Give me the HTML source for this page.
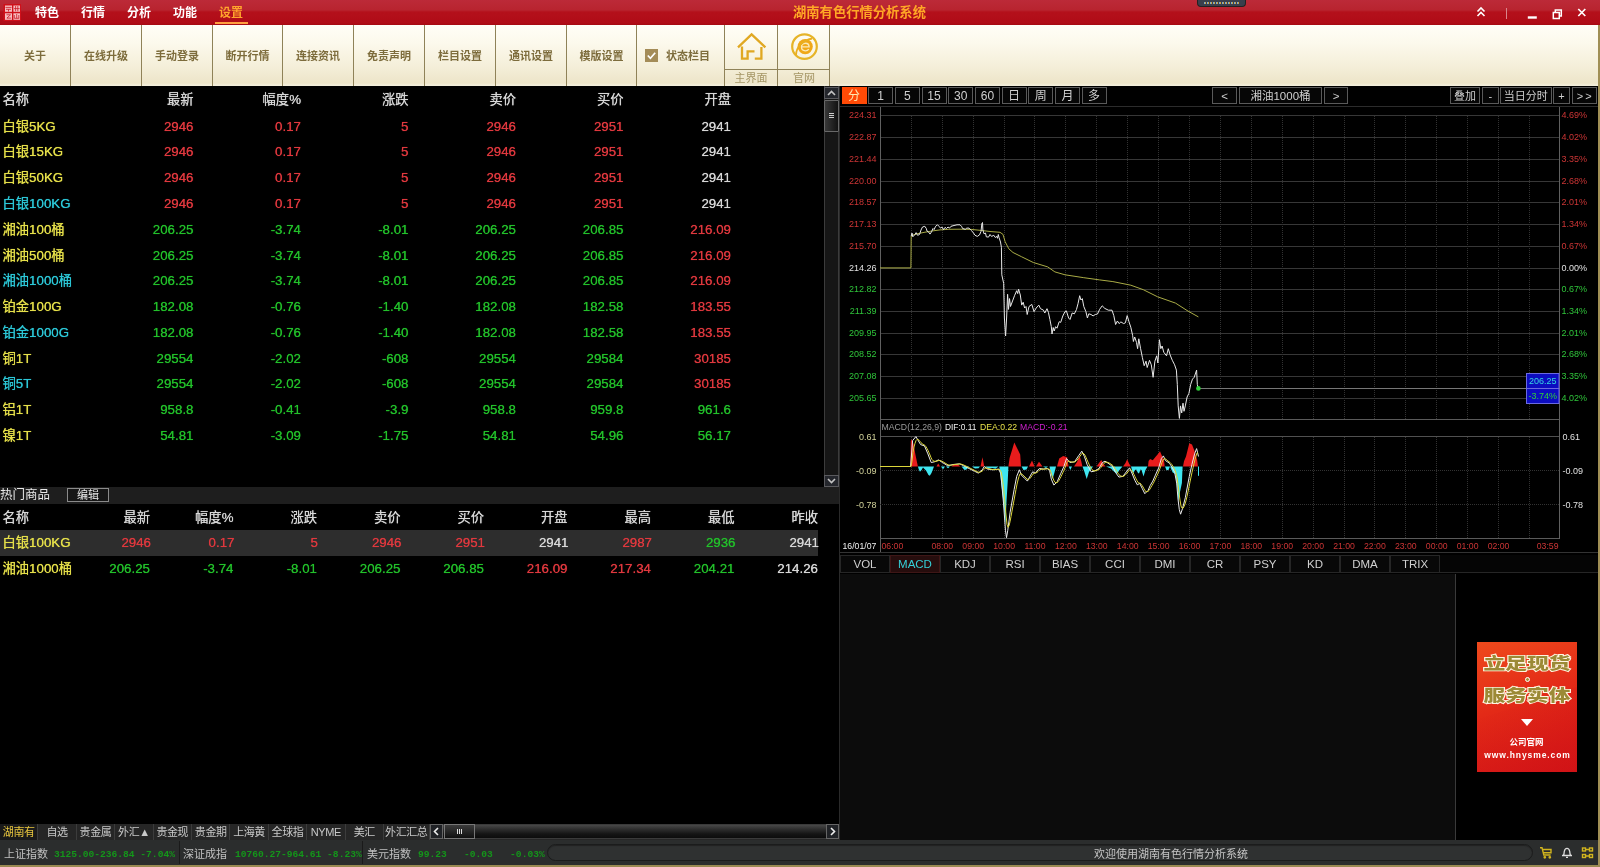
<!DOCTYPE html><html lang="zh"><head><meta charset="utf-8"><title>湖南有色行情分析系统</title><style>
*{margin:0;padding:0;box-sizing:border-box}
html,body{width:1600px;height:867px;overflow:hidden;background:#000}
#app{position:absolute;left:0;top:0;width:1600px;height:867px;will-change:transform}
body{position:relative;font-family:"Liberation Sans","Noto Sans CJK SC",sans-serif;font-size:13.3px;color:#ddd}
.abs{position:absolute}
#title{left:0;top:0;width:1600px;height:25px;background:linear-gradient(#bc2a38 0,#b8242f 10px,#b4101b 12px,#b00c17 23px,#a50a12 25px)}
#title .m{position:absolute;top:5px;font-size:12px;font-weight:bold;color:#fff;line-height:16px;white-space:nowrap}
#toolbar{left:0;top:25px;width:1598px;height:61px;background:linear-gradient(#fffef7 0,#fcf9ec 30%,#f4eed8 70%,#ede5c9 58px,#f3eeda 60px,#f3eeda 61px)}
.tb{position:absolute;top:0;height:61px;border-right:1px solid #8f8258;color:#7d6c3c;font-size:11px;font-weight:bold;text-align:center;line-height:63px;white-space:nowrap}
.row{position:absolute;left:0;height:26px;line-height:26px;white-space:nowrap;text-shadow:0 0 .7px currentColor}
.c{position:absolute;top:0;text-align:right;white-space:nowrap}
.r{color:#e0383e}.g{color:#22c02a}.w{color:#d8d8d8}.y{color:#e6e04a}.cy{color:#2cc8d8}
.btn{position:absolute;top:87px;height:17px;border:1px solid #5a5a5a;background:#060606;color:#d0d0d0;font-size:11.5px;line-height:16px;text-align:center;white-space:nowrap}
.itab{position:absolute;top:555px;width:50px;height:18px;border:1px solid #262626;background:#080808;color:#d0d0d0;font-size:11.5px;line-height:16px;text-align:center}
.btab{position:absolute;top:824px;height:16px;line-height:17px;font-size:11px;color:#c8c8c8;text-align:center;white-space:nowrap;border-right:1px solid #3c3c3c;letter-spacing:-0.4px}
.sl{position:absolute;top:847px;font-size:11px;line-height:15px;color:#c0c0c0;white-space:nowrap}
.sn{position:absolute;top:848px;font-family:"Liberation Mono",monospace;font-size:9.6px;line-height:13px;color:#14961a;white-space:pre;font-weight:bold}
</style></head><body><div id="app">
<div id="title" class="abs">
<svg class="abs" style="left:3px;top:3px" width="19" height="19" viewBox="3 3 19 19"><rect x="3.500" y="4" width="17.500" height="17" fill="#cf101a"/><g fill="#f7bcc0"><rect x="5" y="5.500" width="7" height="6.300"/><rect x="13.400" y="5.500" width="6.600" height="6.300"/><rect x="5" y="13.300" width="7" height="6.500"/><rect x="13.400" y="13.300" width="6.600" height="6.500"/></g><g stroke="#c81824" stroke-width=".8" fill="none"><path d="M5.500 7.400h6M6 9.300h5M8.500 9.300v2.200M15.600 6v5.300M17.800 6v5.300M14 8.600h5.600M6.500 14.800h4l-3.600 3.300h4.300M14.300 15v3.300h5M16.700 14v4.200M18.800 15v3"/></g></svg>
<div class="m" style="left:35px">特色</div>
<div class="m" style="left:81px">行情</div>
<div class="m" style="left:127px">分析</div>
<div class="m" style="left:173px">功能</div>
<div class="m" style="left:219px;color:#ffa42c">设置</div>
<div class="abs" style="left:215px;top:22px;width:33px;height:2px;background:#ffa040"></div>
<div class="abs" style="left:793px;top:4.2px;font-size:13.3px;font-weight:bold;color:#ffa726;line-height:18px;white-space:nowrap">湖南有色行情分析系统</div>
<div class="abs" style="left:1197px;top:0;width:49px;height:7px;background:#3a3f4c;border-radius:0 0 4px 4px;border:1px solid #222;border-top:0"><div style="position:absolute;left:6px;top:2px;width:36px;height:2px;background:repeating-linear-gradient(90deg,#7ac 0 1px,#c9a040 1px 2px,transparent 2px 3px)"></div></div>
<svg class="abs" style="left:1470px;top:0" width="130" height="25" viewBox="0 0 130 25" fill="none" stroke="#fff" stroke-width="1.6"><path d="M7.5 11.5l3.5-3.5l3.5 3.5M7.5 16l3.5-3.5l3.5 3.5"/><path d="M36.5 8v11" stroke="#d9868c" stroke-width="1"/><g transform="translate(-1.2 0)"><path d="M59 17.5h9" stroke-width="2.4"/><path d="M84.5 12.5h6v6h-6zM86.5 12v-2h6v6h-2" stroke-width="1.5"/><path d="M109.5 9l7 7M116.5 9l-7 7" stroke-width="1.7"/></g></svg>
</div>
<div id="toolbar" class="abs">
<div class="tb" style="left:0px;width:71px">关于</div>
<div class="tb" style="left:71px;width:71px">在线升级</div>
<div class="tb" style="left:142px;width:71px">手动登录</div>
<div class="tb" style="left:213px;width:70px">断开行情</div>
<div class="tb" style="left:283px;width:71px">连接资讯</div>
<div class="tb" style="left:354px;width:71px">免责声明</div>
<div class="tb" style="left:425px;width:71px">栏目设置</div>
<div class="tb" style="left:496px;width:71px">通讯设置</div>
<div class="tb" style="left:567px;width:70px">模版设置</div>
<div class="tb" style="left:637px;width:88px;text-align:left"><span style="position:absolute;left:8px;top:24px;width:13px;height:13px;background:#a48c58"></span><svg style="position:absolute;left:8px;top:24px" width="13" height="13" viewBox="0 0 13 13"><path d="M2.8 6.5l2.6 2.8l4.8-5.6" stroke="#fff" stroke-width="1.7" fill="none"/></svg><span style="position:absolute;left:29px">状态栏目</span></div>
<div class="abs" style="left:725px;top:0;width:52.5px;height:61px;border-right:1px solid #8f8258"></div>
<div class="abs" style="left:777.5px;top:0;width:52.5px;height:61px;border-right:1px solid #8f8258"></div>
<div class="abs" style="left:725px;top:44px;width:105px;height:1px;background:#8f8258"></div>
<div class="abs" style="left:725px;top:46px;width:52px;text-align:center;font-size:11px;line-height:14px;color:#a59666">主界面</div>
<div class="abs" style="left:778px;top:46px;width:52px;text-align:center;font-size:11px;line-height:14px;color:#a59666">官网</div>
<svg class="abs" style="left:733px;top:5px" width="38" height="34" viewBox="733 30 38 34" fill="none" stroke="#e0a822" stroke-width="2.300" stroke-linejoin="miter"><path d="M738 47.3L751.6 34.4L765.4 47.3"/><path d="M742 46.5V58.6H747.6V51.4H754.5"/><path d="M754.8 58.6H761.4V47"/></svg>
<svg class="abs" style="left:788px;top:5px" width="34" height="34" viewBox="788 30 34 34" fill="none"><circle cx="804.5" cy="46.6" r="12.3" stroke="#e6b428" stroke-width="2.2"/><circle cx="805.2" cy="46.6" r="7.600" fill="#f0a818"/><path d="M801.5 46.8h7.6c0-2.2-1.6-3.6-3.7-3.6c-2.300 0-3.900 1.600-3.900 3.900c0 2.300 1.600 3.700 3.900 3.700c1.600 0 2.700-.6 3.400-1.600" stroke="#fbe9b8" stroke-width="1.35"/><path d="M796 55c0-7 6-14.500 16-16.500" stroke="#e9ae20" stroke-width="1.8"/></svg>
</div>
<div class="abs" style="left:1598px;top:25px;width:2px;height:842px;background:#a08f55"></div>
<div class="row" style="top:86.5px;width:820px;height:26px;line-height:26px;"><span class="c w" style="left:2.5px;text-align:left">名称</span><span class="c w" style="right:626.5px">最新</span><span class="c w" style="right:519.0px">幅度%</span><span class="c w" style="right:411.5px">涨跌</span><span class="c w" style="right:304.0px">卖价</span><span class="c w" style="right:196.5px">买价</span><span class="c w" style="right:89.0px">开盘</span></div>
<div class="row" style="top:113.7px;width:820px;height:26px;line-height:26px;"><span class="c y" style="left:2.5px;text-align:left">白银5KG</span><span class="c r" style="right:626.5px">2946</span><span class="c r" style="right:519.0px">0.17</span><span class="c r" style="right:411.5px">5</span><span class="c r" style="right:304.0px">2946</span><span class="c r" style="right:196.5px">2951</span><span class="c w" style="right:89.0px">2941</span></div>
<div class="row" style="top:139.4px;width:820px;height:26px;line-height:26px;"><span class="c y" style="left:2.5px;text-align:left">白银15KG</span><span class="c r" style="right:626.5px">2946</span><span class="c r" style="right:519.0px">0.17</span><span class="c r" style="right:411.5px">5</span><span class="c r" style="right:304.0px">2946</span><span class="c r" style="right:196.5px">2951</span><span class="c w" style="right:89.0px">2941</span></div>
<div class="row" style="top:165.2px;width:820px;height:26px;line-height:26px;"><span class="c y" style="left:2.5px;text-align:left">白银50KG</span><span class="c r" style="right:626.5px">2946</span><span class="c r" style="right:519.0px">0.17</span><span class="c r" style="right:411.5px">5</span><span class="c r" style="right:304.0px">2946</span><span class="c r" style="right:196.5px">2951</span><span class="c w" style="right:89.0px">2941</span></div>
<div class="row" style="top:191.0px;width:820px;height:26px;line-height:26px;"><span class="c cy" style="left:2.5px;text-align:left">白银100KG</span><span class="c r" style="right:626.5px">2946</span><span class="c r" style="right:519.0px">0.17</span><span class="c r" style="right:411.5px">5</span><span class="c r" style="right:304.0px">2946</span><span class="c r" style="right:196.5px">2951</span><span class="c w" style="right:89.0px">2941</span></div>
<div class="row" style="top:216.7px;width:820px;height:26px;line-height:26px;"><span class="c y" style="left:2.5px;text-align:left">湘油100桶</span><span class="c g" style="right:626.5px">206.25</span><span class="c g" style="right:519.0px">-3.74</span><span class="c g" style="right:411.5px">-8.01</span><span class="c g" style="right:304.0px">206.25</span><span class="c g" style="right:196.5px">206.85</span><span class="c r" style="right:89.0px">216.09</span></div>
<div class="row" style="top:242.5px;width:820px;height:26px;line-height:26px;"><span class="c y" style="left:2.5px;text-align:left">湘油500桶</span><span class="c g" style="right:626.5px">206.25</span><span class="c g" style="right:519.0px">-3.74</span><span class="c g" style="right:411.5px">-8.01</span><span class="c g" style="right:304.0px">206.25</span><span class="c g" style="right:196.5px">206.85</span><span class="c r" style="right:89.0px">216.09</span></div>
<div class="row" style="top:268.3px;width:820px;height:26px;line-height:26px;"><span class="c cy" style="left:2.5px;text-align:left">湘油1000桶</span><span class="c g" style="right:626.5px">206.25</span><span class="c g" style="right:519.0px">-3.74</span><span class="c g" style="right:411.5px">-8.01</span><span class="c g" style="right:304.0px">206.25</span><span class="c g" style="right:196.5px">206.85</span><span class="c r" style="right:89.0px">216.09</span></div>
<div class="row" style="top:294.0px;width:820px;height:26px;line-height:26px;"><span class="c y" style="left:2.5px;text-align:left">铂金100G</span><span class="c g" style="right:626.5px">182.08</span><span class="c g" style="right:519.0px">-0.76</span><span class="c g" style="right:411.5px">-1.40</span><span class="c g" style="right:304.0px">182.08</span><span class="c g" style="right:196.5px">182.58</span><span class="c r" style="right:89.0px">183.55</span></div>
<div class="row" style="top:319.8px;width:820px;height:26px;line-height:26px;"><span class="c cy" style="left:2.5px;text-align:left">铂金1000G</span><span class="c g" style="right:626.5px">182.08</span><span class="c g" style="right:519.0px">-0.76</span><span class="c g" style="right:411.5px">-1.40</span><span class="c g" style="right:304.0px">182.08</span><span class="c g" style="right:196.5px">182.58</span><span class="c r" style="right:89.0px">183.55</span></div>
<div class="row" style="top:345.6px;width:820px;height:26px;line-height:26px;"><span class="c y" style="left:2.5px;text-align:left">铜1T</span><span class="c g" style="right:626.5px">29554</span><span class="c g" style="right:519.0px">-2.02</span><span class="c g" style="right:411.5px">-608</span><span class="c g" style="right:304.0px">29554</span><span class="c g" style="right:196.5px">29584</span><span class="c r" style="right:89.0px">30185</span></div>
<div class="row" style="top:371.4px;width:820px;height:26px;line-height:26px;"><span class="c cy" style="left:2.5px;text-align:left">铜5T</span><span class="c g" style="right:626.5px">29554</span><span class="c g" style="right:519.0px">-2.02</span><span class="c g" style="right:411.5px">-608</span><span class="c g" style="right:304.0px">29554</span><span class="c g" style="right:196.5px">29584</span><span class="c r" style="right:89.0px">30185</span></div>
<div class="row" style="top:397.1px;width:820px;height:26px;line-height:26px;"><span class="c y" style="left:2.5px;text-align:left">铝1T</span><span class="c g" style="right:626.5px">958.8</span><span class="c g" style="right:519.0px">-0.41</span><span class="c g" style="right:411.5px">-3.9</span><span class="c g" style="right:304.0px">958.8</span><span class="c g" style="right:196.5px">959.8</span><span class="c g" style="right:89.0px">961.6</span></div>
<div class="row" style="top:422.9px;width:820px;height:26px;line-height:26px;"><span class="c y" style="left:2.5px;text-align:left">镍1T</span><span class="c g" style="right:626.5px">54.81</span><span class="c g" style="right:519.0px">-3.09</span><span class="c g" style="right:411.5px">-1.75</span><span class="c g" style="right:304.0px">54.81</span><span class="c g" style="right:196.5px">54.96</span><span class="c g" style="right:89.0px">56.17</span></div>
<div class="abs" style="left:824px;top:86px;width:15px;height:402px;background:#161616;border-left:1px solid #3c3c3c;border-right:1px solid #3c3c3c"></div>
<div class="abs" style="left:824px;top:87px;width:15px;height:12px;background:#24262c;border:1px solid #5a5a5e"><svg width="13" height="10" viewBox="-1 0 13 10" style="display:block"><path d="M2 7l3.500-3.500l3.500 3.500" stroke="#c4c4c4" stroke-width="1.600" fill="none"/></svg></div>
<div class="abs" style="left:824px;top:100px;width:15px;height:32px;background:linear-gradient(90deg,#383838,#121212);border:1px solid #686868;border-radius:1px"><div style="position:absolute;left:4px;top:12px;width:5px;height:1px;background:#ccc;box-shadow:0 2px 0 #ccc,0 4px 0 #ccc"></div></div>
<div class="abs" style="left:824px;top:474.500px;width:15px;height:12.500px;background:#24262c;border:1px solid #5a5a5e"><svg width="13" height="10" viewBox="-1 0 13 10" style="display:block"><path d="M2 3l3.500 3.500l3.500-3.500" stroke="#c4c4c4" stroke-width="1.600" fill="none"/></svg></div>
<div class="abs" style="left:0;top:487.300px;width:840px;height:16.300px;background:#1e1e1e"></div>
<div class="abs" style="left:0;top:488px;font-size:12.500px;line-height:15px;color:#e8e8e8;white-space:nowrap">热门商品</div>
<div class="abs" style="left:67px;top:488px;width:42px;height:14px;border:1px solid #8a8a8a;background:#161616;font-size:11px;line-height:12px;color:#e8e8e8;text-align:center">编辑</div>
<div class="row" style="top:504.5px;width:820px;height:26px;line-height:26px;"><span class="c w" style="left:2.5px;text-align:left">名称</span><span class="c w" style="right:670.0px">最新</span><span class="c w" style="right:586.5px">幅度%</span><span class="c w" style="right:503.0px">涨跌</span><span class="c w" style="right:419.5px">卖价</span><span class="c w" style="right:336.0px">买价</span><span class="c w" style="right:252.5px">开盘</span><span class="c w" style="right:169.0px">最高</span><span class="c w" style="right:85.5px">最低</span><span class="c w" style="right:2.0px">昨收</span></div>
<div class="row" style="top:529.8px;width:820px;height:26px;line-height:26px;background:#2d2d2d;width:818px;"><span class="c y" style="left:2.5px;text-align:left">白银100KG</span><span class="c r" style="right:667.0px">2946</span><span class="c r" style="right:583.5px">0.17</span><span class="c r" style="right:500.0px">5</span><span class="c r" style="right:416.5px">2946</span><span class="c r" style="right:333.0px">2951</span><span class="c w" style="right:249.5px">2941</span><span class="c r" style="right:166.0px">2987</span><span class="c g" style="right:82.5px">2936</span><span class="c w" style="right:-1.0px">2941</span></div>
<div class="row" style="top:556.2px;width:820px;height:26px;line-height:26px;"><span class="c y" style="left:2.5px;text-align:left">湘油1000桶</span><span class="c g" style="right:670.0px">206.25</span><span class="c g" style="right:586.5px">-3.74</span><span class="c g" style="right:503.0px">-8.01</span><span class="c g" style="right:419.5px">206.25</span><span class="c g" style="right:336.0px">206.85</span><span class="c r" style="right:252.5px">216.09</span><span class="c r" style="right:169.0px">217.34</span><span class="c g" style="right:85.5px">204.21</span><span class="c w" style="right:2.0px">214.26</span></div>
<div class="abs" style="left:0;top:824px;width:840px;height:16px;background:#262626"></div>
<div class="btab" style="left:0.0px;width:38.4px;color:#e8c63e;background:#1a1a1a;">湖南有</div>
<div class="btab" style="left:38.4px;width:38.4px;">自选</div>
<div class="btab" style="left:76.8px;width:38.4px;">贵金属</div>
<div class="btab" style="left:115.2px;width:38.4px;">外汇▲</div>
<div class="btab" style="left:153.6px;width:38.4px;">贵金现</div>
<div class="btab" style="left:192.0px;width:38.4px;">贵金期</div>
<div class="btab" style="left:230.4px;width:38.4px;">上海黄</div>
<div class="btab" style="left:268.8px;width:38.4px;">全球指</div>
<div class="btab" style="left:307.2px;width:38.4px;">NYME</div>
<div class="btab" style="left:345.6px;width:38.4px;">美汇</div>
<div class="btab" style="left:384.0px;width:45.5px;">外汇汇总</div>
<div class="abs" style="left:430px;top:824px;width:409px;height:15px;background:linear-gradient(#484848,#2c2c2c 35%,#141414 70%,#0c0c0c);border:1px solid #3a3a3a"></div>
<div class="abs" style="left:430px;top:824px;width:13px;height:15px;background:#202226;border:1px solid #666"><svg width="11" height="13" viewBox="0 0 11 13" style="display:block"><path d="M7 3l-3.500 3.500l3.500 3.500" stroke="#eee" stroke-width="1.600" fill="none"/></svg></div>
<div class="abs" style="left:826px;top:824px;width:13px;height:15px;background:#202226;border:1px solid #666"><svg width="11" height="13" viewBox="0 0 11 13" style="display:block"><path d="M4 3l3.500 3.500l-3.500 3.500" stroke="#eee" stroke-width="1.600" fill="none"/></svg></div>
<div class="abs" style="left:444px;top:824px;width:31px;height:15px;background:linear-gradient(#3c3c3c,#101010);border:1px solid #777"><div style="position:absolute;left:12px;top:4px;width:1px;height:5px;background:#ddd;box-shadow:2px 0 0 #ddd,4px 0 0 #ddd"></div></div>
<div class="abs" style="left:0;top:840px;width:1598px;height:25px;background:#2b2d2d"></div>
<div class="abs" style="left:0;top:865px;width:1600px;height:2px;background:#9a8a52"></div>
<div class="sl" style="left:4px">上证指数</div><div class="sn" style="left:54px">3125.00-236.84 -7.04%</div>
<div class="abs" style="left:179px;top:841px;width:1px;height:23px;background:#1a1a1a"></div>
<div class="sl" style="left:183px">深证成指</div><div class="sn" style="left:235px">10760.27-964.61 -8.23%</div>
<div class="abs" style="left:362px;top:841px;width:1px;height:23px;background:#1a1a1a"></div>
<div class="sl" style="left:367px">美元指数</div><div class="sn" style="left:418px">99.23   -0.03   -0.03%</div>
<div class="abs" style="left:547px;top:844px;width:986px;height:17px;border-radius:9px;background:#2f3131;border:1px solid #1b1c1c;box-shadow:inset 0 1px 1px #222"></div>
<div class="abs" style="left:1094px;top:847px;font-size:11px;line-height:15px;color:#c4c4c4;white-space:nowrap">欢迎使用湖南有色行情分析系统</div>
<svg class="abs" style="left:1538px;top:845px" width="58" height="16" viewBox="1538 845 58 16" fill="none"><g stroke="#d2b51e" stroke-width="1.4"><path d="M1540 847.700h2l1.800 7.300h6.800M1543 849.500h8v3.200h-7.200"/><circle cx="1544.800" cy="857.300" r=".7"/><circle cx="1549.800" cy="857.300" r=".7"/></g><g stroke="#ddd" stroke-width="1.300"><path d="M1562 855.500h10M1563.500 855.300c.6-1 .5-2.300 .8-4c.4-2 1.500-3 2.700-3s2.300 1 2.700 3c.3 1.700 .2 3 .8 4"/><path d="M1566 857.300h2"/></g><g stroke="#d2b51e" stroke-width="1.400"><rect x="1582.500" y="848" width="3" height="3"/><rect x="1589.500" y="848" width="3" height="3"/><rect x="1582.500" y="854.500" width="3" height="3"/><rect x="1589.500" y="854.500" width="3" height="3"/><path d="M1585.500 849.500h4M1585.500 856h4"/></g></svg><style>.adt{position:absolute;left:18px;width:64px;text-align:center;font-size:16px;font-weight:900;line-height:20px;color:#9c8a36;white-space:nowrap;transform:scaleX(1.36);transform-origin:50% 50%;-webkit-text-stroke:1.8px #fff6e2;paint-order:stroke fill}</style><div class="abs" style="left:839px;top:86px;width:1px;height:754px;background:#2a2a2a"></div>
<div class="btn" style="left:841.5px;width:25px;font-size:12px;background:#ff4a06;border-color:#ff4a06;color:#ffe9b0;">分</div>
<div class="btn" style="left:868.2px;width:25px;font-size:12px;">1</div>
<div class="btn" style="left:894.8px;width:25px;font-size:12px;">5</div>
<div class="btn" style="left:921.5px;width:25px;font-size:12px;">15</div>
<div class="btn" style="left:948.2px;width:25px;font-size:12px;">30</div>
<div class="btn" style="left:974.9px;width:25px;font-size:12px;">60</div>
<div class="btn" style="left:1001.5px;width:25px;font-size:12px;">日</div>
<div class="btn" style="left:1028.2px;width:25px;font-size:12px;">周</div>
<div class="btn" style="left:1054.9px;width:25px;font-size:12px;">月</div>
<div class="btn" style="left:1081.5px;width:25px;font-size:12px;">多</div>
<div class="btn" style="left:1212.0px;width:25.0px;">&lt;</div>
<div class="btn" style="left:1239.0px;width:83.0px;">湘油1000桶</div>
<div class="btn" style="left:1324.0px;width:24.0px;">&gt;</div>
<div class="btn" style="left:1450.0px;width:30.0px;font-size:11px;">叠加</div>
<div class="btn" style="left:1482.0px;width:16.5px;font-size:11px;">-</div>
<div class="btn" style="left:1500.0px;width:51.5px;font-size:11px;">当日分时</div>
<div class="btn" style="left:1553.0px;width:17.0px;font-size:11px;">+</div>
<div class="btn" style="left:1571.5px;width:25.5px;font-size:11px;letter-spacing:2px;text-indent:2px;">&gt;&gt;</div>
<svg class="abs" style="left:840px;top:104px" width="758" height="452" viewBox="840 104 758 452" font-family="'Liberation Sans',sans-serif" font-size="9">
<g stroke="#373737" stroke-width="1" shape-rendering="crispEdges">
<path d="M840 106.500H1598" stroke="#2c2c2c"/>
<path d="M880 115.5H1560"/>
<path d="M880 137.5H1560"/>
<path d="M880 159.5H1560"/>
<path d="M880 181.5H1560"/>
<path d="M880 202.5H1560"/>
<path d="M880 224.5H1560"/>
<path d="M880 246.5H1560"/>
<path d="M880 268.5H1560"/>
<path d="M880 289.5H1560"/>
<path d="M880 311.5H1560"/>
<path d="M880 333.5H1560"/>
<path d="M880 354.5H1560"/>
<path d="M880 376.5H1560"/>
<path d="M880 398.5H1560"/>
<path d="M880 419.500H1560" stroke="#5a5a5a"/>
<path d="M880 436.500H1560" stroke="#505050"/>
<path d="M880 538.500H1560" stroke="#5a5a5a"/>
<path d="M840 552.500H1598" stroke="#333"/>
<path d="M880.500 107V552" stroke="#606060"/><path d="M1559.500 107V539" stroke="#606060"/>
</g>
<g stroke="#323232" stroke-width="1" stroke-dasharray="1 1" shape-rendering="crispEdges">
<path d="M911.5 116V419M911.5 437V538"/>
<path d="M942.5 116V419M942.5 437V538"/>
<path d="M973.5 116V419M973.5 437V538"/>
<path d="M1004.5 116V419M1004.5 437V538"/>
<path d="M1034.5 116V419M1034.5 437V538"/>
<path d="M1065.5 116V419M1065.5 437V538"/>
<path d="M1096.5 116V419M1096.5 437V538"/>
<path d="M1127.5 116V419M1127.5 437V538"/>
<path d="M1158.5 116V419M1158.5 437V538"/>
<path d="M1189.5 116V419M1189.5 437V538"/>
<path d="M1220.5 116V419M1220.5 437V538"/>
<path d="M1251.5 116V419M1251.5 437V538"/>
<path d="M1282.5 116V419M1282.5 437V538"/>
<path d="M1313.5 116V419M1313.5 437V538"/>
<path d="M1344.5 116V419M1344.5 437V538"/>
<path d="M1374.5 116V419M1374.5 437V538"/>
<path d="M1405.5 116V419M1405.5 437V538"/>
<path d="M1436.5 116V419M1436.5 437V538"/>
<path d="M1467.5 116V419M1467.5 437V538"/>
<path d="M1498.5 116V419M1498.5 437V538"/>
<path d="M1529.5 116V419M1529.5 437V538"/>
<path d="M880 470.500H1560M880 504.500H1560"/>
</g>
<text x="876.500" y="118.4" text-anchor="end" fill="#cc3535">224.31</text>
<text x="1561.500" y="118.4" fill="#cc3535">4.69%</text>
<text x="876.500" y="140.4" text-anchor="end" fill="#cc3535">222.87</text>
<text x="1561.500" y="140.4" fill="#cc3535">4.02%</text>
<text x="876.500" y="162.4" text-anchor="end" fill="#cc3535">221.44</text>
<text x="1561.500" y="162.4" fill="#cc3535">3.35%</text>
<text x="876.500" y="184.4" text-anchor="end" fill="#cc3535">220.00</text>
<text x="1561.500" y="184.4" fill="#cc3535">2.68%</text>
<text x="876.500" y="205.4" text-anchor="end" fill="#cc3535">218.57</text>
<text x="1561.500" y="205.4" fill="#cc3535">2.01%</text>
<text x="876.500" y="227.4" text-anchor="end" fill="#cc3535">217.13</text>
<text x="1561.500" y="227.4" fill="#cc3535">1.34%</text>
<text x="876.500" y="249.4" text-anchor="end" fill="#cc3535">215.70</text>
<text x="1561.500" y="249.4" fill="#cc3535">0.67%</text>
<text x="876.500" y="271.4" text-anchor="end" fill="#e0e0e0">214.26</text>
<text x="1561.500" y="271.4" fill="#e0e0e0">0.00%</text>
<text x="876.500" y="292.4" text-anchor="end" fill="#2fc43a">212.82</text>
<text x="1561.500" y="292.4" fill="#2fc43a">0.67%</text>
<text x="876.500" y="314.4" text-anchor="end" fill="#2fc43a">211.39</text>
<text x="1561.500" y="314.4" fill="#2fc43a">1.34%</text>
<text x="876.500" y="336.4" text-anchor="end" fill="#2fc43a">209.95</text>
<text x="1561.500" y="336.4" fill="#2fc43a">2.01%</text>
<text x="876.500" y="357.4" text-anchor="end" fill="#2fc43a">208.52</text>
<text x="1561.500" y="357.4" fill="#2fc43a">2.68%</text>
<text x="876.500" y="379.4" text-anchor="end" fill="#2fc43a">207.08</text>
<text x="1561.500" y="379.4" fill="#2fc43a">3.35%</text>
<text x="876.500" y="401.4" text-anchor="end" fill="#2fc43a">205.65</text>
<text x="1561.500" y="401.4" fill="#2fc43a">4.02%</text>
<text x="876.500" y="440.1" text-anchor="end" fill="#d2d29a">0.61</text>
<text x="1562.500" y="440.1" fill="#e0e0e0">0.61</text>
<text x="876.500" y="474.1" text-anchor="end" fill="#d2d29a">-0.09</text>
<text x="1562.500" y="474.1" fill="#e0e0e0">-0.09</text>
<text x="876.500" y="508.1" text-anchor="end" fill="#d2d29a">-0.78</text>
<text x="1562.500" y="508.1" fill="#e0e0e0">-0.78</text>
<g font-size="9.2"><text x="881.500" y="430.300" fill="#9a9a9a" textLength="60.500" lengthAdjust="spacingAndGlyphs">MACD(12,26,9)</text><text x="945" y="430.300" fill="#f0f0f0" textLength="31.500" lengthAdjust="spacingAndGlyphs">DIF:0.11</text><text x="980" y="430.300" fill="#e6e04a" textLength="37" lengthAdjust="spacingAndGlyphs">DEA:0.22</text><text x="1020" y="430.300" fill="#d020d0" textLength="47.500" lengthAdjust="spacingAndGlyphs">MACD:-0.21</text></g>
<g font-size="8.700">
<text x="842.500" y="548.800" fill="#f0f0f0">16/01/07</text>
<text x="881.500" y="548.800" fill="#cc3535">06:00</text>
<text x="942.3" y="548.800" text-anchor="middle" fill="#cc3535">08:00</text>
<text x="973.2" y="548.800" text-anchor="middle" fill="#cc3535">09:00</text>
<text x="1004.1" y="548.800" text-anchor="middle" fill="#cc3535">10:00</text>
<text x="1035.0" y="548.800" text-anchor="middle" fill="#cc3535">11:00</text>
<text x="1065.9" y="548.800" text-anchor="middle" fill="#cc3535">12:00</text>
<text x="1096.8" y="548.800" text-anchor="middle" fill="#cc3535">13:00</text>
<text x="1127.7" y="548.800" text-anchor="middle" fill="#cc3535">14:00</text>
<text x="1158.6" y="548.800" text-anchor="middle" fill="#cc3535">15:00</text>
<text x="1189.5" y="548.800" text-anchor="middle" fill="#cc3535">16:00</text>
<text x="1220.4" y="548.800" text-anchor="middle" fill="#cc3535">17:00</text>
<text x="1251.3" y="548.800" text-anchor="middle" fill="#cc3535">18:00</text>
<text x="1282.2" y="548.800" text-anchor="middle" fill="#cc3535">19:00</text>
<text x="1313.1" y="548.800" text-anchor="middle" fill="#cc3535">20:00</text>
<text x="1344.0" y="548.800" text-anchor="middle" fill="#cc3535">21:00</text>
<text x="1374.9" y="548.800" text-anchor="middle" fill="#cc3535">22:00</text>
<text x="1405.8" y="548.800" text-anchor="middle" fill="#cc3535">23:00</text>
<text x="1436.7" y="548.800" text-anchor="middle" fill="#cc3535">00:00</text>
<text x="1467.6" y="548.800" text-anchor="middle" fill="#cc3535">01:00</text>
<text x="1498.5" y="548.800" text-anchor="middle" fill="#cc3535">02:00</text>
<text x="1558.500" y="548.800" text-anchor="end" fill="#cc3535">03:59</text>
</g>
<polyline points="880.0,267.9 910.9,267.9 911.2,236.0 913.0,235.0 918.0,233.6 925.0,232.2 932.0,231.0 940.0,229.9 948.8,229.3 960.0,229.2 971.0,229.4 980.0,230.3 990.0,231.5 1000.0,232.3 1003.0,234.4 1005.1,241.6 1008.8,248.8 1013.0,252.5 1021.7,256.8 1033.3,262.5 1047.7,266.9 1054.9,271.9 1065.0,274.8 1083.8,277.7 1099.6,279.9 1112.9,281.6 1130.8,285.2 1143.3,289.7 1157.6,296.8 1175.5,303.1 1188.0,311.1 1198.4,316.9" fill="none" stroke="#a9ab46" stroke-width="1" stroke-linejoin="round"/>
<polyline points="911.2,236.0 912.0,233.0 912.8,236.8 915.0,234.5 916.1,232.6 917.6,235.3 919.5,234.5 921.0,230.0 922.5,227.0 924.8,226.3 926.3,228.5 927.0,231.1 928.5,231.9 930.0,234.1 931.5,231.9 933.0,228.5 934.1,229.6 935.6,226.3 937.5,224.8 939.0,226.3 940.5,228.1 942.0,227.0 943.5,229.6 945.0,227.4 946.5,228.5 948.0,227.0 949.5,228.1 951.0,226.3 954.0,225.5 957.0,224.8 960.0,224.8 961.5,226.3 962.6,228.5 965.3,229.3 966.8,228.1 969.0,228.1 971.3,230.4 973.5,233.0 975.0,235.3 977.3,236.4 979.5,234.9 981.0,231.5 981.9,223.3 982.5,222.5 982.9,230.0 984.0,233.8 985.5,233.0 986.3,236.8 988.5,237.1 990.0,234.5 991.5,236.4 993.8,235.3 995.3,237.5 996.8,236.4 997.5,238.3 998.3,234.5 999.0,237.5 1000.5,242.0 1001.4,247.3 1001.8,274.8 1003.7,283.5 1004.4,318.0 1005.6,336.0 1006.6,318.0 1007.6,294.3 1008.5,309.4 1009.5,298.6 1010.5,306.5 1014.5,295.7 1016.7,290.7 1017.7,293.6 1018.6,289.2 1020.3,295.0 1021.7,305.1 1023.2,302.2 1024.6,308.0 1026.0,306.5 1027.2,314.5 1029.0,306.5 1031.8,304.4 1034.0,311.6 1036.2,308.0 1038.8,305.1 1040.5,308.7 1043.4,310.1 1044.8,313.0 1047.0,308.7 1048.4,312.3 1049.9,319.5 1051.3,326.7 1052.0,334.0 1053.2,327.5 1054.2,331.0 1055.6,326.7 1057.0,328.2 1059.2,321.7 1060.7,322.4 1062.8,316.0 1065.0,311.6 1066.4,310.9 1068.6,318.0 1070.0,319.5 1072.2,313.0 1074.4,313.8 1076.5,309.4 1078.0,303.7 1079.7,295.7 1080.9,300.0 1082.3,298.6 1083.8,306.5 1085.9,311.6 1087.4,318.0 1088.8,313.8 1091.0,314.5 1093.1,315.9 1095.3,314.5 1097.5,314.0 1099.6,309.4 1102.2,305.8 1104.8,308.4 1108.4,310.2 1112.0,310.2 1113.8,315.6 1115.6,324.5 1117.4,321.0 1119.1,323.6 1120.9,321.9 1123.6,323.6 1125.4,322.8 1127.2,315.6 1129.0,321.9 1130.8,327.2 1132.6,335.3 1133.4,341.5 1134.7,337.0 1136.5,342.4 1137.6,348.7 1138.8,338.8 1140.6,348.7 1142.4,357.6 1144.2,365.7 1146.0,361.2 1147.2,367.5 1149.5,360.3 1151.3,364.8 1153.1,377.3 1154.9,361.2 1156.7,355.8 1157.9,363.0 1159.4,339.7 1160.8,348.7 1162.1,346.0 1163.8,352.3 1166.5,355.8 1168.3,348.7 1170.1,354.9 1172.3,360.3 1174.6,364.8 1176.4,370.1 1177.3,384.4 1178.2,405.9 1179.4,418.4 1180.5,405.9 1181.7,413.0 1183.0,403.2 1184.0,411.3 1185.3,405.9 1187.1,397.0 1188.9,393.4 1190.7,384.4 1192.5,379.1 1194.2,377.3 1196.6,370.1 1197.3,384.4 1198.2,388.4" fill="none" stroke="#e8e8e8" stroke-width="1" stroke-linejoin="round"/>
<path d="M1199 388.500H1527" stroke="#777" stroke-width="1" shape-rendering="crispEdges"/>
<circle cx="1198.400" cy="388.400" r="2.300" fill="#2fd03a"/>
<rect x="1526.500" y="373.500" width="32.500" height="15" fill="#0c0cc0" stroke="#6a6ae0"/><rect x="1526.500" y="388.500" width="32.500" height="15" fill="#0c0cc0" stroke="#6a6ae0"/>
<text x="1529" y="384.300" fill="#35d6e0">206.25</text><text x="1528.500" y="399.300" fill="#2fd03a">-3.74%</text>
<polygon points="910.4,466.5 910.8,441.0 912.0,439.3 913.5,444.0 915.5,455.0 917.9,466.5" fill="#e81c1c"/>
<polygon points="917.9,466.5 919.0,470.0 920.0,471.8 921.5,470.0 923.0,467.5 926.0,470.5 928.5,475.0 929.8,475.8 931.5,473.0 934.0,466.5" fill="#3fe6f0"/>
<polygon points="936.5,466.5 938.2,463.6 940.0,466.5" fill="#e81c1c"/>
<polygon points="941.0,466.5 943.0,469.3 945.0,466.5" fill="#3fe6f0"/>
<polygon points="946.0,466.5 948.0,468.3 950.0,466.5" fill="#3fe6f0"/>
<polygon points="951.5,466.5 954.0,464.3 958.0,464.8 960.5,466.5" fill="#e81c1c"/>
<polygon points="961.5,466.5 964.5,470.0 966.5,469.5 969.0,466.5" fill="#3fe6f0"/>
<polygon points="972.0,466.5 975.0,468.4 978.5,468.2 980.0,466.5" fill="#3fe6f0"/>
<polygon points="980.5,466.5 982.5,457.2 984.2,466.5" fill="#e81c1c"/>
<polygon points="985.0,466.5 988.0,468.6 992.0,468.0 995.5,468.7 998.5,466.5" fill="#3fe6f0"/>
<polygon points="999.3,466.5 1003.2,500.0 1005.4,524.0 1006.6,500.0 1007.8,480.0 1008.4,466.5" fill="#3fe6f0"/>
<polygon points="1008.4,466.5 1009.6,458.0 1012.5,448.5 1014.3,442.6 1016.5,447.0 1018.5,451.0 1020.2,454.5 1021.0,466.5" fill="#e81c1c"/>
<polygon points="1021.5,466.5 1023.5,470.0 1026.5,469.5 1028.0,466.5" fill="#3fe6f0"/>
<polygon points="1029.0,466.5 1032.0,460.5 1034.6,466.5" fill="#e81c1c"/>
<polygon points="1036.0,466.5 1039.0,461.8 1042.5,466.5" fill="#e81c1c"/>
<polygon points="1043.0,466.5 1046.0,468.0 1048.0,466.5" fill="#3fe6f0"/>
<polygon points="1049.5,466.5 1051.0,474.0 1052.6,479.1 1054.3,473.0 1056.0,466.5" fill="#3fe6f0"/>
<polygon points="1057.0,466.5 1059.2,458.5 1063.2,455.9 1067.2,457.2 1068.5,466.5" fill="#e81c1c"/>
<polygon points="1068.8,466.5 1070.3,470.0 1072.0,466.5" fill="#3fe6f0"/>
<polygon points="1074.0,466.5 1077.0,462.0 1079.6,455.9 1081.2,461.0 1082.4,466.5" fill="#e81c1c"/>
<polygon points="1082.5,466.5 1084.5,472.0 1086.7,479.1 1089.0,472.0 1093.0,466.5" fill="#3fe6f0"/>
<polygon points="1096.5,466.5 1099.0,463.0 1101.3,459.9 1103.5,464.0 1105.5,466.5" fill="#e81c1c"/>
<polygon points="1106.0,466.5 1111.0,468.5 1114.5,472.0 1117.0,473.8 1119.5,470.0 1122.5,466.5" fill="#3fe6f0"/>
<polygon points="1123.0,466.5 1125.5,463.0 1127.2,459.2 1129.0,463.5 1131.0,466.5" fill="#e81c1c"/>
<polygon points="1131.0,466.5 1132.9,473.8 1135.0,470.0 1136.2,469.5 1138.0,473.0 1139.0,473.5 1140.5,469.5 1141.5,470.0 1143.5,476.4 1145.5,470.0 1147.5,466.5" fill="#3fe6f0"/>
<polygon points="1148.0,466.5 1148.6,461.0 1150.1,458.9 1152.8,460.3 1155.4,457.0 1158.0,454.0 1160.0,451.2 1162.0,456.0 1164.0,460.5 1164.7,466.5" fill="#e81c1c"/>
<polygon points="1165.0,466.5 1166.5,470.2 1168.5,470.0 1170.0,466.5" fill="#3fe6f0"/>
<polygon points="1170.0,466.5 1172.7,472.5 1175.3,474.0 1177.0,485.0 1178.6,501.5 1180.0,492.0 1181.9,483.0 1182.6,466.5" fill="#3fe6f0"/>
<polygon points="1183.0,466.5 1184.0,461.2 1186.0,456.5 1189.3,443.3 1192.0,444.6 1194.6,451.2 1197.2,460.5 1197.9,466.5" fill="#e81c1c"/>
<path d="M1198.500 466.500V475.800" stroke="#3fe6f0" stroke-width="1"/>
<polyline points="880.0,466.5 910.6,466.5 912.6,440.6 915.9,436.6 917.9,440.0 920.6,444.6 924.5,445.9 927.9,453.9 931.2,462.5 934.5,461.8 938.5,459.9 942.5,462.5 947.8,465.8 953.0,464.5 959.7,463.8 963.7,465.8 969.0,468.5 974.3,471.1 978.3,473.1 982.3,469.8 984.2,466.5 987.6,469.1 992.9,469.8 998.8,469.1 1000.8,473.8 1003.5,503.0 1005.5,530.8 1006.5,537.7 1007.7,530.8 1010.1,512.3 1014.1,489.7 1016.7,476.4 1019.4,469.8 1021.4,475.1 1024.7,478.4 1027.4,481.1 1030.7,475.1 1032.7,471.8 1035.3,473.1 1039.3,468.5 1043.3,469.1 1047.3,468.5 1049.6,470.5 1051.3,479.1 1053.9,485.1 1057.2,481.7 1060.6,473.8 1063.9,466.5 1066.5,458.5 1069.9,462.5 1074.5,461.8 1078.5,455.9 1081.8,451.2 1084.4,456.5 1087.1,464.5 1091.1,471.8 1094.4,471.1 1099.0,468.5 1102.4,462.5 1105.0,461.2 1109.0,463.8 1113.0,467.1 1115.6,472.5 1118.9,477.1 1122.9,476.4 1126.9,471.1 1129.6,467.8 1132.2,473.8 1134.9,480.4 1137.5,485.1 1139.5,483.1 1142.2,488.4 1144.8,493.7 1148.1,490.4 1150.1,485.7 1152.8,481.1 1155.4,475.1 1158.7,467.8 1161.4,458.5 1163.4,455.9 1165.4,460.5 1169.4,463.2 1172.0,467.1 1174.7,472.5 1176.7,483.1 1178.0,499.0 1179.3,509.6 1180.6,514.2 1182.6,508.3 1185.3,497.7 1187.3,487.0 1189.3,476.4 1191.9,464.5 1194.6,453.9 1196.6,448.6 1198.5,456.5" fill="none" stroke="#ececec" stroke-width="1" stroke-linejoin="round"/>
<polyline points="880.0,466.5 881.0,466.5 882.0,466.5 883.0,466.5 884.0,466.5 885.0,466.5 886.0,466.5 887.0,466.5 888.0,466.5 889.0,466.5 890.0,466.5 891.0,466.5 892.0,466.5 893.0,466.5 894.0,466.5 895.0,466.5 896.0,466.5 897.0,466.5 898.0,466.5 899.0,466.5 900.0,466.5 901.0,466.5 902.0,466.5 903.0,466.5 904.0,466.5 905.0,466.5 906.0,466.5 907.0,466.5 908.0,466.5 909.0,466.5 910.0,466.5 911.0,466.5 912.0,461.1 913.0,452.5 914.0,447.0 915.0,443.3 916.0,440.6 917.0,439.4 918.0,439.5 919.0,440.2 920.0,441.3 921.0,442.7 922.0,443.6 923.0,444.3 924.0,444.9 925.0,445.4 926.0,446.7 927.0,448.4 928.0,450.4 929.0,452.7 930.0,455.0 931.0,457.5 932.0,459.6 933.0,460.7 934.0,461.2 935.0,461.4 936.0,461.4 937.0,461.1 938.0,460.8 939.0,460.4 940.0,460.5 941.0,460.8 942.0,461.3 943.0,461.8 944.0,462.4 945.0,463.0 946.0,463.6 947.0,464.2 948.0,464.8 949.0,465.1 950.0,465.2 951.0,465.2 952.0,465.0 953.0,464.9 954.0,464.7 955.0,464.5 956.0,464.4 957.0,464.3 958.0,464.2 959.0,464.1 960.0,464.0 961.0,464.1 962.0,464.4 963.0,464.7 964.0,465.2 965.0,465.6 966.0,466.1 967.0,466.6 968.0,467.1 969.0,467.6 970.0,468.1 971.0,468.6 972.0,469.1 973.0,469.6 974.0,470.1 975.0,470.6 976.0,471.1 977.0,471.6 978.0,472.1 979.0,472.4 980.0,472.2 981.0,471.8 982.0,471.2 983.0,470.4 984.0,469.2 985.0,468.2 986.0,467.9 987.0,468.1 988.0,468.5 989.0,468.8 990.0,469.0 991.0,469.2 992.0,469.4 993.0,469.6 994.0,469.6 995.0,469.6 996.0,469.6 997.0,469.5 998.0,469.4 999.0,469.3 1000.0,470.0 1001.0,471.4 1002.0,476.0 1003.0,483.3 1004.0,492.1 1005.0,503.1 1006.0,515.0 1007.0,524.3 1008.0,527.3 1009.0,525.8 1010.0,521.8 1011.0,516.6 1012.0,511.2 1013.0,505.8 1014.0,500.2 1015.0,494.7 1016.0,489.4 1017.0,484.1 1018.0,480.0 1019.0,476.5 1020.0,473.9 1021.0,473.5 1022.0,474.3 1023.0,475.1 1024.0,476.0 1025.0,477.0 1026.0,478.0 1027.0,478.9 1028.0,479.7 1029.0,479.4 1030.0,478.4 1031.0,477.1 1032.0,475.6 1033.0,474.1 1034.0,473.3 1035.0,473.1 1036.0,472.9 1037.0,472.4 1038.0,471.6 1039.0,470.6 1040.0,469.7 1041.0,469.3 1042.0,469.1 1043.0,469.1 1044.0,469.1 1045.0,469.0 1046.0,468.9 1047.0,468.8 1048.0,468.8 1049.0,469.1 1050.0,469.7 1051.0,472.2 1052.0,475.4 1053.0,478.2 1054.0,480.8 1055.0,482.3 1056.0,482.7 1057.0,482.6 1058.0,481.8 1059.0,480.4 1060.0,478.6 1061.0,476.6 1062.0,474.5 1063.0,472.3 1064.0,470.2 1065.0,467.7 1066.0,465.0 1067.0,462.3 1068.0,461.3 1069.0,461.1 1070.0,461.6 1071.0,461.9 1072.0,462.1 1073.0,462.1 1074.0,462.0 1075.0,461.9 1076.0,461.2 1077.0,460.1 1078.0,458.9 1079.0,457.6 1080.0,456.2 1081.0,454.8 1082.0,453.4 1083.0,453.2 1084.0,453.9 1085.0,455.2 1086.0,457.3 1087.0,459.7 1088.0,462.1 1089.0,464.2 1090.0,466.3 1091.0,468.2 1092.0,469.7 1093.0,470.4 1094.0,470.8 1095.0,470.9 1096.0,470.7 1097.0,470.3 1098.0,469.9 1099.0,469.4 1100.0,468.6 1101.0,467.4 1102.0,465.9 1103.0,464.4 1104.0,463.4 1105.0,462.5 1106.0,462.1 1107.0,462.2 1108.0,462.5 1109.0,462.9 1110.0,463.5 1111.0,464.2 1112.0,464.9 1113.0,465.7 1114.0,466.8 1115.0,468.3 1116.0,470.1 1117.0,471.7 1118.0,473.2 1119.0,474.7 1120.0,475.6 1121.0,476.1 1122.0,476.3 1123.0,476.4 1124.0,476.0 1125.0,475.2 1126.0,474.2 1127.0,473.1 1128.0,471.9 1129.0,470.7 1130.0,469.5 1131.0,469.7 1132.0,470.9 1133.0,472.5 1134.0,474.5 1135.0,476.7 1136.0,478.8 1137.0,480.7 1138.0,482.5 1139.0,483.1 1140.0,483.2 1141.0,484.1 1142.0,485.4 1143.0,487.0 1144.0,488.8 1145.0,490.7 1146.0,491.6 1147.0,491.7 1148.0,491.4 1149.0,490.5 1150.0,489.0 1151.0,487.2 1152.0,485.5 1153.0,483.8 1154.0,481.9 1155.0,479.8 1156.0,477.6 1157.0,475.5 1158.0,473.3 1159.0,471.1 1160.0,468.4 1161.0,465.4 1162.0,462.4 1163.0,460.1 1164.0,458.5 1165.0,458.6 1166.0,459.4 1167.0,460.2 1168.0,461.0 1169.0,461.7 1170.0,462.4 1171.0,463.5 1172.0,464.8 1173.0,466.3 1174.0,468.0 1175.0,469.8 1176.0,472.9 1177.0,477.0 1178.0,484.2 1179.0,492.5 1180.0,500.1 1181.0,506.0 1182.0,508.2 1183.0,508.3 1184.0,506.6 1185.0,504.0 1186.0,500.7 1187.0,496.5 1188.0,491.9 1189.0,486.9 1190.0,481.9 1191.0,477.1 1192.0,472.4 1193.0,467.9 1194.0,463.7 1195.0,459.6 1196.0,456.1 1197.0,452.9 1198.0,452.9" fill="none" stroke="#dcd63a" stroke-width="1" stroke-linejoin="round"/>
</svg>
<div class="abs" style="left:840px;top:555px;width:758px;height:18px;background:#050505;border-bottom:1px solid #262626"></div>
<div class="itab" style="left:840px;">VOL</div>
<div class="itab" style="left:890px;background:#260d0d;border-color:#3e1616;color:#35d0d8;">MACD</div>
<div class="itab" style="left:940px;">KDJ</div>
<div class="itab" style="left:990px;">RSI</div>
<div class="itab" style="left:1040px;">BIAS</div>
<div class="itab" style="left:1090px;">CCI</div>
<div class="itab" style="left:1140px;">DMI</div>
<div class="itab" style="left:1190px;">CR</div>
<div class="itab" style="left:1240px;">PSY</div>
<div class="itab" style="left:1290px;">KD</div>
<div class="itab" style="left:1340px;">DMA</div>
<div class="itab" style="left:1390px;">TRIX</div>
<div class="abs" style="left:840px;top:574px;width:615px;height:266px;background:#0c0c0c"></div>
<div class="abs" style="left:1455px;top:574px;width:1px;height:266px;background:#3a3a3a"></div>
<div class="abs" style="left:1476.500px;top:642px;width:100px;height:129.500px;overflow:hidden;background:linear-gradient(160deg,#ef4a1c 0%,#e32a17 45%,#d81a18 100%)"><div style="position:absolute;left:-20px;top:60px;width:160px;height:90px;background:linear-gradient(170deg,rgba(230,40,20,.0),rgba(200,10,20,.55));transform:rotate(-18deg)"></div><div class="adt" style="top:11.500px">立足现货</div><div style="position:absolute;left:48px;top:35px;width:5px;height:5px;border-radius:50%;background:#a89238;border:1.500px solid #fff"></div><div class="adt" style="top:43.500px">服务实体</div><div style="position:absolute;left:44.500px;top:76.500px;width:0;height:0;border-left:6.500px solid transparent;border-right:6.500px solid transparent;border-top:7px solid #fff"></div><div style="position:absolute;left:0;top:94.500px;width:100px;text-align:center;font-size:8.500px;font-weight:bold;color:#fff;line-height:11px">公司官网</div><div style="position:absolute;left:1px;top:107.500px;width:100px;text-align:center;font-size:8.500px;font-weight:bold;color:#fff;line-height:11px;letter-spacing:.9px;white-space:nowrap">www.hnysme.com</div></div></div></body></html>
